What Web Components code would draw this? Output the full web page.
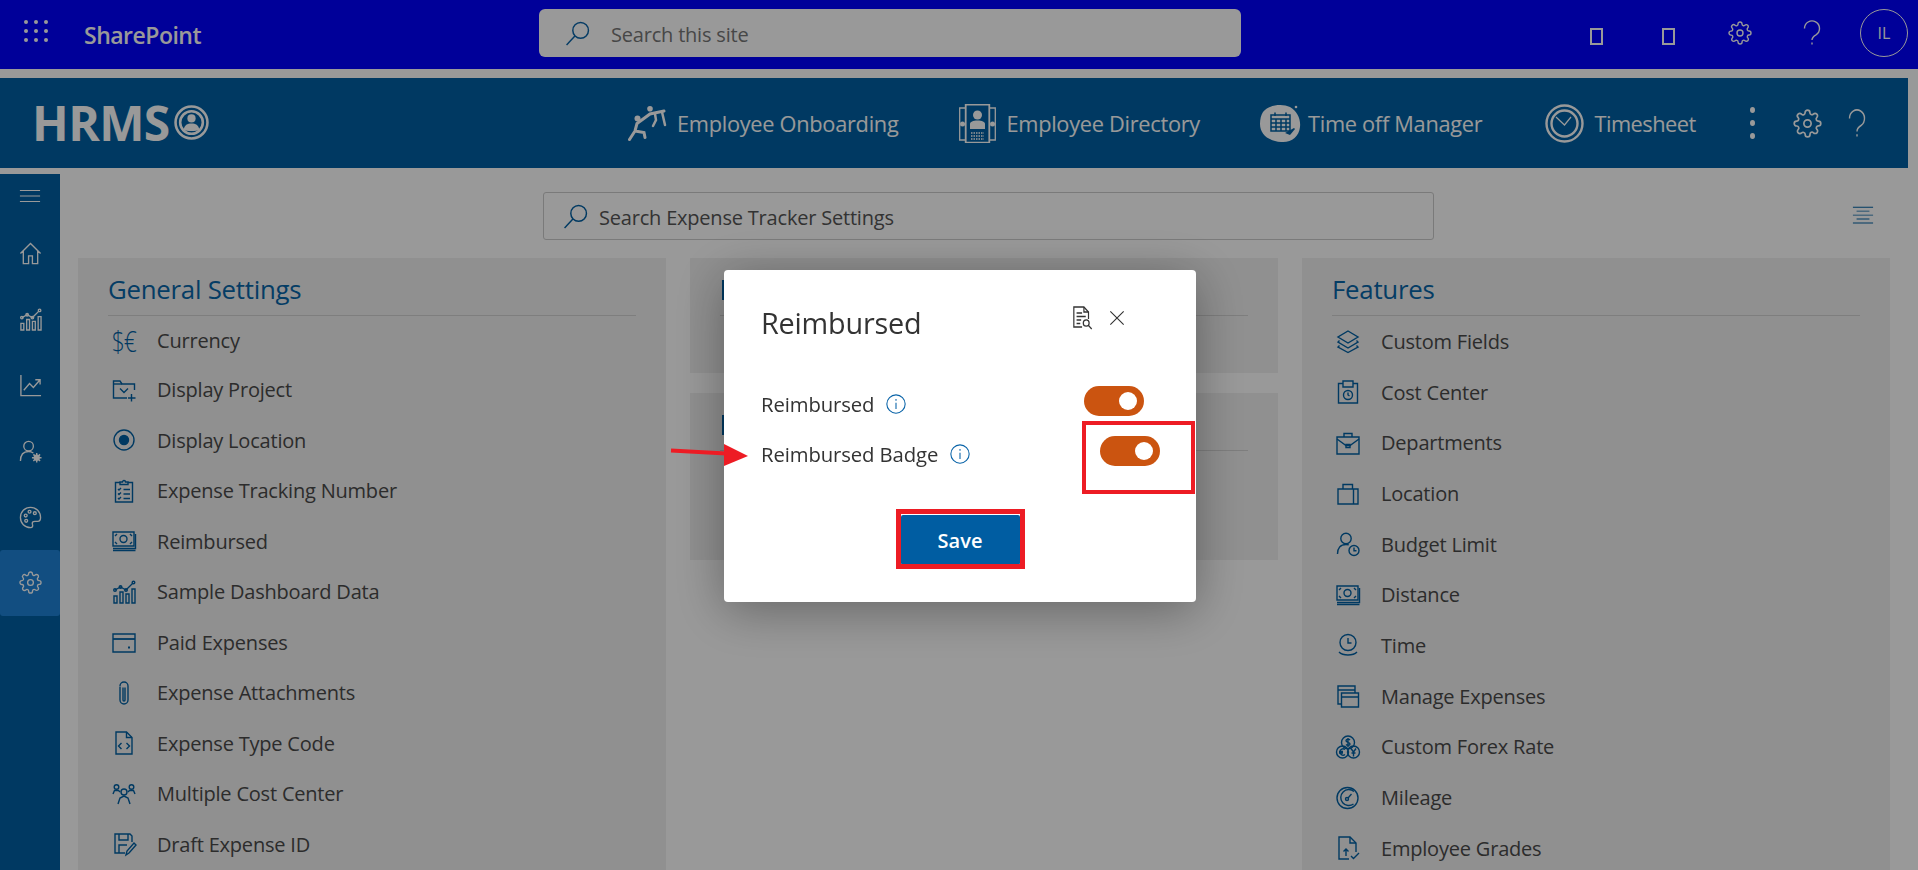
<!DOCTYPE html>
<html lang="en">
<head>
<meta charset="utf-8">
<title>Expense Tracker Settings</title>
<style>
    html, body { margin: 0; height: 100%; overflow: hidden; background: #fff; }
    body { font-family: "Open Sans", "Noto Sans", sans-serif; }
</style>
</head>
<body>
<page-shell>
    <top-bar></top-bar>
    <app-header></app-header>
    <div slot="body" style="display:flex; height:702px;">
        <side-rail></side-rail>
        <settings-main>
            <settings-panel slot="first" heading="General Settings" style="--row:50.5px; --list-top:-2px;">
                <settings-item icon="currency" style="box-sizing:border-box; padding-top:3px;">Currency</settings-item>
                <settings-item icon="folder">Display Project</settings-item>
                <settings-item icon="radio">Display Location</settings-item>
                <settings-item icon="clipboard">Expense Tracking Number</settings-item>
                <settings-item icon="money">Reimbursed</settings-item>
                <settings-item icon="bars">Sample Dashboard Data</settings-item>
                <settings-item icon="card">Paid Expenses</settings-item>
                <settings-item icon="clip">Expense Attachments</settings-item>
                <settings-item icon="code">Expense Type Code</settings-item>
                <settings-item icon="team">Multiple Cost Center</settings-item>
                <settings-item icon="draft">Draft Expense ID</settings-item>
            </settings-panel>
            <settings-panel slot="middle" stem style="height:115px;"></settings-panel>
            <settings-panel slot="middle" stem style="height:167px;"></settings-panel>
            <settings-panel slot="last" heading="Features">
                <settings-item icon="layers">Custom Fields</settings-item>
                <settings-item icon="cost">Cost Center</settings-item>
                <settings-item icon="briefcase">Departments</settings-item>
                <settings-item icon="suitcase">Location</settings-item>
                <settings-item icon="userclock">Budget Limit</settings-item>
                <settings-item icon="money">Distance</settings-item>
                <settings-item icon="time">Time</settings-item>
                <settings-item icon="windows">Manage Expenses</settings-item>
                <settings-item icon="coins">Custom Forex Rate</settings-item>
                <settings-item icon="gauge">Mileage</settings-item>
                <settings-item icon="fileup">Employee Grades</settings-item>
            </settings-panel>
        </settings-main>
    </div>
</page-shell>

<modal-dialog heading="Reimbursed">
    <toggle-row style="--end:52px;">Reimbursed</toggle-row>
    <toggle-row style="--end:36px;">Reimbursed Badge</toggle-row>
</modal-dialog>

<script>
const GEAR = `<path d="M19.4 15a1.65 1.65 0 0 0 .33 1.82l.06.06a2 2 0 1 1-2.83 2.83l-.06-.06a1.65 1.65 0 0 0-1.82-.33 1.65 1.65 0 0 0-1 1.51V21a2 2 0 0 1-4 0v-.09A1.65 1.65 0 0 0 9 19.4a1.65 1.65 0 0 0-1.82.33l-.06.06a2 2 0 1 1-2.83-2.83l.06-.06a1.65 1.65 0 0 0 .33-1.82 1.65 1.65 0 0 0-1.51-1H3a2 2 0 0 1 0-4h.09A1.65 1.65 0 0 0 4.6 9a1.65 1.65 0 0 0-.33-1.82l-.06-.06a2 2 0 1 1 2.83-2.83l.06.06a1.65 1.65 0 0 0 1.82.33H9a1.65 1.65 0 0 0 1-1.51V3a2 2 0 0 1 4 0v.09a1.65 1.65 0 0 0 1 1.51 1.65 1.65 0 0 0 1.82-.33l.06-.06a2 2 0 1 1 2.83 2.83l-.06.06a1.65 1.65 0 0 0-.33 1.82V9a1.65 1.65 0 0 0 1.51 1H21a2 2 0 0 1 0 4h-.09a1.65 1.65 0 0 0-1.51 1z"/><circle cx="12" cy="12" r="3"/>`;

// all the line icons, drawn on a 24 box
const ICONS = {
    search: `<circle cx="15" cy="9" r="7.5"/><path d="M9.5 14.5 1.5 23"/>`,
    gear: GEAR,
    question: `<path d="M4.5 7.5a7.5 7.5 0 1 1 11.5 6.3c-2.5 1.5-4 3-4 5.2"/><path d="M12 21.500v2"/>`,
    menu: `<path d="M1 2.5h22M1 12h22M1 21.500h22"/>`,
    justify: `<path d="M1 1.5h22M5 6.5h14M1 11.5h22M5 16.5h14M1 21.5h22"/>`,
    home: `<path d="M1.5 12 12 1.5 22.5 12M4.5 9.5V22.5h5.5v-8h4v8h5.5V9.5"/>`,
    bars: `<path d="M2 16h3v7H2zM8 12h3v11H8zM14 14h3v9h-3zM20 9h3v14h-3z"/><path d="M3 10l5.5-3 5.5 3L21 3"/><circle cx="3" cy="10" r="1.3"/><circle cx="8.5" cy="7" r="1.3"/><circle cx="14" cy="10" r="1.3"/><circle cx="21.5" cy="2.5" r="1.3"/>`,
    chart: `<path d="M2 1v21.5h21"/><path d="M5 17l6-7 4 4 7-8M17 6h5v5"/>`,
    usergear: `<circle cx="10" cy="6.5" r="5"/><path d="M1.5 22c0-6 3-10 8.5-10 2 0 3.500.5 5 1.500"/><circle cx="18.500" cy="18.500" r="2" stroke-width="2.500"/><path d="M18.500 13.500v10M13.500 18.500h10M15 15l7 7M22 15l-7 7" stroke-width="1.500"/>`,
    palette: `<path d="M12 1.500C6 1.500 1.500 6 1.500 12S6 22.500 12 22.500c2.500 0 2.500-2 2-3.500-.5-2 .5-3 2.500-3h3c2 0 3-1.500 3-4C22.500 6 18 1.500 12 1.500z"/><circle cx="7" cy="10" r="1.500"/><circle cx="11" cy="6" r="1.500"/><circle cx="16.500" cy="7.500" r="1.500"/><circle cx="7.500" cy="15.500" r="1.500"/>`,
    folder: `<path d="M22.500 12V6H10L8 3H1.500v17H15"/><path d="M1.500 6H10"/><path d="M8 10.500l4 4 4-4M19.500 16v7.500M16 20h7.500"/>`,
    radio: `<circle cx="12" cy="12" r="10"/><circle cx="12" cy="12" r="4.500" fill="currentColor"/>`,
    clipboard: `<path d="M8 3.500H3.500v19.500h17V3.500H16"/><path d="M8 5.500V3h2.500a1.500 1.500 0 0 1 3 0H16v2.500z"/><path d="M6 10l1 1 2-2M6 14.500l1 1 2-2M6 19l1 1 2-2M11.500 10.500H18M11.500 15H18M11.500 19.500H18"/>`,
    money: `<path d="M1 3h21v14H1z"/><circle cx="11.500" cy="10" r="3.500"/><path d="M3 7l2-2M3 13l2 2M20 7l-2-2M20 13l-2 2"/><path d="M1 19.500h22.500V5M1 21.500h22.500"/>`,
    card: `<path d="M1 4h22v18H1z"/><path d="M1 9h22" stroke-width="1.800"/><path d="M16 17.500h2" stroke-width="2"/>`,
    clip: `<path d="M8 5.500V19a4 4 0 0 0 8 0V5a4 4 0 0 0-8 0"/><path d="M11 6.500V19a1 1 0 0 0 2 0V6.500"/>`,
    code: `<path d="M4 1h10.500L20 6.500V23H4z"/><path d="M14.500 1v5.500H20"/><path d="M9.500 12l-3 3 3 3M14.500 12l3 3-3 3"/>`,
    team: `<circle cx="12" cy="10" r="3"/><path d="M6 22l2-6 4-2 4 2 2 6"/><circle cx="4.500" cy="5" r="2.300"/><circle cx="19.500" cy="5" r="2.300"/><path d="M1 12l1.500-3.500h4L8 10M16 10l1.500-1.500h4L23 12"/>`,
    draft: `<path d="M13 21H3V2h15l2 2v6"/><path d="M7 2v6h9V2M7 21v-8h8"/><path d="M14 23l1-4 7-8 2 2-7 8z"/>`,
    layers: `<path d="M12 2 22 8l-10 6L2 8z"/><path d="M3.500 11.500 2 13l10 6 10-6-1.500-1.500"/><path d="M3.500 16.500 2 18l10 5.500L22 18l-1.500-1.500"/>`,
    cost: `<path d="M7 3.500H2.500V23h19V3.500H17"/><path d="M7 1h10v6H7z"/><circle cx="12" cy="15" r="4.500"/><path d="M12 12.500V15l1.500 1"/>`,
    briefcase: `<path d="M1 6h22v17H1z"/><path d="M8 6V2.500h8V6"/><path d="M1 8l9 6.500h4L23 8"/><path d="M10 13.500h4v3h-4z"/>`,
    suitcase: `<path d="M2 8h20v15H2z"/><path d="M7 8V3.500h9.500V8M17.500 8v15"/>`,
    userclock: `<circle cx="10" cy="6.500" r="5.200"/><path d="M1.500 22c0-6 3-9.500 8.500-9.500 1 0 2 .1 2.800.4"/><circle cx="18" cy="18.500" r="5"/><path d="M18 15.500v3.200h2.500"/>`,
    time: `<circle cx="12" cy="9.500" r="8"/><path d="M12 5v5h3.500"/><path d="M3 19c4 4 14 4 18 0"/>`,
    windows: `<path d="M2 2h17v4H2zM2 6v14h3M19 6v3"/><path d="M5.500 9h17v14h-17zM5.500 13h17"/>`,
    coins: `<circle cx="12" cy="7.500" r="6.500"/><circle cx="6.500" cy="17" r="6"/><circle cx="17.500" cy="17" r="6"/><path d="M14 5c-1-1.200-4-1.200-4 .7 0 2 4 1.200 4 3.200 0 1.800-3 1.800-4 .6M12 3v9"/><path d="M9 14.500c-2-1.500-5-.5-5 2.500s3 4 5 2.500M3 16.500h4M3 18h4"/><path d="M15 13.500l2.500 3.500 2.500-3.500M17.500 17v4.500M15.500 18h4"/>`,
    gauge: `<circle cx="11.500" cy="12" r="10.500"/><path d="M18 5.500A8 8 0 1 0 17.500 18"/><circle cx="11" cy="13" r="1.500"/><path d="M12 12l3.500-4"/>`,
    fileup: `<path d="M13 23H3V1h11l6 6v9"/><path d="M14 1v6h6"/><path d="M10 20v-7M7.500 15.500 10 13l2.500 2.500M15 20l2.500 2.500L23 17"/>`,
    docsearch: `<path d="M11 21H2V1h11l5 5v7"/><path d="M13 1v5h5M5 7h6M5 10.500h10M5 14h5M5 17.500h4"/><circle cx="15.500" cy="17" r="3.200"/><path d="M18 19.500l3.500 3.500"/>`,
    close: `<path d="M2 2l20 20M22 2 2 22"/>`,
    info: `<circle cx="12" cy="12" r="11"/><path d="M12 10.500V18"/><path d="M12 6v2" />`
};

// <ui-icon name="..."> a line icon, sized from the outside with --size
class UiIcon extends HTMLElement {
    constructor() {
        super();
        this.attachShadow({ mode: 'open' });
    }

    connectedCallback() {
        const name = this.getAttribute('name');
        const sw = this.getAttribute('sw') || '1.4';
        this.shadowRoot.innerHTML = `
            <style>
                :host{ display:inline-flex; width:var(--size,24px); height:var(--size-h,var(--size,24px)); flex:none; }
                svg{ width:100%; height:100%; display:block; overflow:visible; }
            </style>
            <svg viewBox="0 0 24 24" preserveAspectRatio="none" fill="none" stroke="currentColor" stroke-width="${sw}">${ICONS[name]}</svg>`;
    }
}
customElements.define('ui-icon', UiIcon);

class PageShell extends HTMLElement {
    constructor() {
        super();
        const template = document.createElement('template');
        template.innerHTML = `
            <style>
                :host{ display:flex; flex-direction:column; height:870px; overflow:hidden; background:#fff; }
            </style>
            <slot></slot>
            <slot name="body"></slot>`;
        this.attachShadow({ mode: 'open' });
        this.shadowRoot.appendChild(template.content.cloneNode(true));
    }
}
customElements.define('page-shell', PageShell);

class TopBar extends HTMLElement {
    constructor() {
        super();
        const dots = Array.from({ length: 9 }, () => '<i></i>').join('');
        this.attachShadow({ mode: 'open' });
        this.shadowRoot.innerHTML = `
            <style>
                :host{ display:flex; align-items:center; height:69px; background:#0000ff; color:#fff; flex:none; }
                .left{ width:539px; display:flex; align-items:center; flex:none; }
                .waffle{ display:grid; grid-template-columns:repeat(3,4px); gap:5px 6px; margin:-8px 0 0 24px; }
                .waffle i{ width:4px; height:4px; border-radius:50%; background:#fff; }
                .brand{ margin:0 0 0 36px; font-size:23px; font-weight:600; letter-spacing:-.5px; }
                .search{ width:702px; height:48px; margin-bottom:3px; background:#fff; border-radius:6px; display:flex; align-items:center; flex:none; box-sizing:border-box; padding-left:26px; }
                .search ui-icon{ --size:25px; color:#0a64a8; }
                .search span{ margin-left:21px; padding-top:3px; font-size:20px; color:#777; letter-spacing:-.2px; }
                .right{ margin-left:auto; display:flex; align-items:center; padding-right:10px; }
                .cell{ width:72px; display:flex; justify-content:center; margin-top:-4px; }
                .tofu{ width:9px; height:13px; border:2px solid #fff; margin-top:8px; }
                .cell ui-icon{ --size:24px; }
                .avatar{ width:46px; height:46px; border:1px solid #fff; border-radius:50%; margin-left:12px; display:flex; align-items:center; justify-content:center; font-size:16px; margin-bottom:3px; }
            </style>
            <div class="left"><div class="waffle">${dots}</div><div class="brand">SharePoint</div></div>
            <div class="search"><ui-icon name="search"></ui-icon><span>Search this site</span></div>
            <div class="right">
                <div class="cell"><div class="tofu"></div></div>
                <div class="cell"><div class="tofu"></div></div>
                <div class="cell"><ui-icon name="gear" sw="1.400"></ui-icon></div>
                <div class="cell"><ui-icon name="question" sw="1.400"></ui-icon></div>
                <div class="avatar">IL</div>
            </div>`;
    }
}
customElements.define('top-bar', TopBar);

class AppHeader extends HTMLElement {
    constructor() {
        super();
        this.attachShadow({ mode: 'open' });
        this.shadowRoot.innerHTML = `
            <style>
                :host{ display:flex; align-items:center; height:90px; margin:9px 10px 0 0; background:#0060a3; color:#fff; flex:none; }
                .logo{ width:628px; box-sizing:border-box; padding-left:32px; display:flex; align-items:center; flex:none; font-weight:700; font-size:48px; letter-spacing:-.6px; color:#fff; margin-top:-2px; }
                .logo svg{ width:35px; height:35px; margin-left:4px; }
                nav{ display:flex; align-items:center; gap:60px; }
                a{ display:flex; align-items:center; gap:10px; font-size:21.800px; letter-spacing:-.3px; color:#fff; }
                a:first-child{ margin-right:1px; }
                a:nth-child(3){ gap:6px; margin-right:3px; }
                a:nth-child(4){ letter-spacing:-.5px; }
                .tools{ display:flex; align-items:center; margin-left:54px; }
                .dots{ display:flex; flex-direction:column; gap:7px; width:5px; }
                .dots i{ width:5px; height:6px; border-radius:50%; background:#fff; }
                .tools ui-icon{ --size:29px; margin-left:38px; }
                .tools ui-icon.q{ --size:24px; --size-h:27px; margin-left:23px; }
            </style>
            <div class="logo">HRMS<svg viewBox="0 0 34 34" fill="none" stroke="#fff"><circle cx="17" cy="17" r="15.500" stroke-width="2.500"/><circle cx="17" cy="17" r="11" stroke-width="2.500"/><circle cx="17" cy="13" r="4" fill="#fff" stroke="none"/><path d="M9.500 24c.5-4.500 3.500-6 7.500-6s7 1.500 7.500 6c-2 1.800-13 1.800-15 0z" fill="#fff" stroke="none"/></svg></div>
            <nav>
                <a><svg width="39" height="35" viewBox="0 0 39 35" fill="none" stroke="#fff" stroke-width="3" stroke-linecap="round"><circle cx="9.500" cy="12.500" r="3" fill="#fff" stroke="none"/><circle cx="22" cy="2.800" r="2.800" fill="#fff" stroke="none"/><path d="M9 17.500 7 25 1.500 33.500M7 25l9 1.500 1 5M9 17.500 22 8 36 5"/><path d="M27 8l1 6-3 6M34 6l3 13" stroke-width="2.500"/></svg>Employee Onboarding</a>
                <a><svg width="37" height="39" viewBox="0 0 37 39" fill="none" stroke="#fff" stroke-width="1.300"><path d="M7 4H.7v32H7M30 4h6.300v32H30"/><path d="M6.700.7h23.600v38H6.700z" stroke-width="1.800"/><circle cx="18.500" cy="11" r="4.500" fill="#fff" stroke="none"/><path d="M11 25v-5c0-2 3-3.500 7.500-3.500S26 18 26 20v5z" fill="#fff" stroke="none"/><path d="M12 29h13M12 32h13M12 35h13" stroke-dasharray="1.500 1"/><circle cx="3.500" cy="20" r="2.500" fill="#fff" stroke="none"/><circle cx="33.500" cy="20" r="2.500" fill="#fff" stroke="none"/></svg>Employee Directory</a>
                <a><svg width="42" height="39" viewBox="0 0 42 39"><path d="M3 8C8 1 22-1 30 3c7 4 11 12 10 20-1 10-9 16-19 15C8 37 0 30 0 20 0 15 1 11 3 8z" fill="#fff"/><circle cx="36" cy="3" r="1.300" fill="#fff"/><g fill="none" stroke="#0060a3" stroke-width="1.500"><path d="M11 11h19v16H11zM11 15h19M15 8.500V12M26 8.500V12M11 19h19M11 23h19M16 15v12M21 15v12M26 15v12"/></g><path d="M25 29l9-5 1 1-5 6z" fill="#0060a3"/></svg>Time off Manager</a>
                <a><svg width="39" height="39" viewBox="0 0 39 39" fill="none" stroke="#fff" stroke-width="2.400"><circle cx="19.500" cy="19.500" r="18"/><circle cx="19.500" cy="19.500" r="13"/><path d="M11 13l8.500 8L26 13" stroke-width="1.200"/></svg>Timesheet</a>
            </nav>
            <div class="tools">
                <div class="dots"><i></i><i></i><i></i></div>
                <ui-icon name="gear"></ui-icon>
                <ui-icon class="q" name="question"></ui-icon>
            </div>`;
    }
}
customElements.define('app-header', AppHeader);

class SideRail extends HTMLElement {
    constructor() {
        super();
        const names = ['home', 'bars', 'chart', 'usergear', 'palette', 'gear'];
        const cells = names.map((n, i) =>
            `<div class="cell ${i === 5 ? 'on' : ''}"><ui-icon name="${n}"></ui-icon></div>`).join('');
        this.attachShadow({ mode: 'open' });
        this.shadowRoot.innerHTML = `
            <style>
                :host{ display:block; width:60px; flex:none; margin-top:6px; background:#0060a3; color:#fff; }
                .burger{ height:47px; display:flex; align-items:center; justify-content:center; }
                .burger ui-icon{ --size:22px; --size-h:14px; margin-top:-4px; }
                .cell{ height:65.800px; display:flex; align-items:center; justify-content:center; border-radius:3px; }
                .cell ui-icon{ --size:23px; }
                .on{ background:#1e83d8; }
            </style>
            <div class="burger"><ui-icon name="menu" sw="1.800"></ui-icon></div>
            ${cells}`;
    }
}
customElements.define('side-rail', SideRail);

// the search row and the three columns under it
class SettingsMain extends HTMLElement {
    constructor() {
        super();
        this.attachShadow({ mode: 'open' });
        this.shadowRoot.innerHTML = `
            <style>
                :host{ display:block; flex:1; min-width:0; padding:24px 28px 0 18px; }
                .top{ display:grid; grid-template-columns:465px 891px 1fr; align-items:center; height:48px; margin-bottom:18px; }
                .box{ grid-column:2; height:48px; box-sizing:border-box; border:1px solid #ccc; border-radius:3px; display:flex; align-items:center; padding-left:19px; }
                .box ui-icon{ --size:25px; color:#0060a3; }
                .box span{ margin-left:11px; padding-top:3px; font-size:20px; color:#555; letter-spacing:-.2px; }
                .top > ui-icon{ justify-self:end; margin-right:16px; --size:22px; --size-h:19px; color:#0060a3; margin-top:-2px; }
                .cols{ display:grid; grid-template-columns:repeat(3,588px); gap:24px; height:700px; }
                .mid{ display:flex; flex-direction:column; gap:20px; }
                ::slotted(settings-panel){ display:block; }
            </style>
            <div class="top">
                <div class="box"><ui-icon name="search"></ui-icon><span>Search Expense Tracker Settings</span></div>
                <ui-icon name="justify" sw="1.200"></ui-icon>
            </div>
            <div class="cols">
                <slot name="first"></slot>
                <div class="mid"><slot name="middle"></slot></div>
                <slot name="last"></slot>
            </div>`;
    }
}
customElements.define('settings-main', SettingsMain);

class SettingsPanel extends HTMLElement {
    constructor() {
        super();
        const heading = this.getAttribute('heading');
        const stem = this.hasAttribute('stem');
        this.attachShadow({ mode: 'open' });
        this.shadowRoot.innerHTML = `
            <style>
                :host{ display:block; background:#f0f0f0; box-sizing:border-box; padding:14px 30px 0; overflow:hidden; }
                h2{ margin:0; font-weight:400; font-size:25.800px; line-height:34px; height:34px; padding-bottom:9px; border-bottom:1px solid #d2d2d2; color:#0866a8; letter-spacing:-.25px; }
                .stem{ display:inline-block; width:3px; height:20px; background:#0060a3; margin:8px 0 0 2px; vertical-align:top; }
                .list{ margin-top:var(--list-top,0); }
            </style>
            <h2>${heading || ''}${stem ? '<span class="stem"></span>' : ''}</h2>
            <div class="list"><slot></slot></div>`;
    }
}
customElements.define('settings-panel', SettingsPanel);

class SettingsItem extends HTMLElement {
    constructor() {
        super();
        const icon = this.getAttribute('icon');
        const glyph = icon === 'currency'
            ? '<span class="cur">$€</span>'
            : `<ui-icon name="${icon}"></ui-icon>`;
        this.attachShadow({ mode: 'open' });
        this.shadowRoot.innerHTML = `
            <style>
                :host{ display:flex; align-items:center; height:var(--row,50.700px); color:#4a4a4a; font-size:20px; letter-spacing:-.2px; }
                .ico{ width:32px; margin-right:17px; display:flex; justify-content:center; color:#0060a3; flex:none; }
                .ico ui-icon{ --size:24px; }
                .cur{ display:inline-block; transform:scale(.95,1.250); font-size:24px; letter-spacing:-1px; line-height:24px; font-weight:300; color:#0060a3; }
            </style>
            <div class="ico">${glyph}</div>
            <slot></slot>`;
    }
}
customElements.define('settings-item', SettingsItem);

class ToggleRow extends HTMLElement {
    constructor() {
        super();
        this.attachShadow({ mode: 'open' });
        this.shadowRoot.innerHTML = `
            <style>
                :host{ display:flex; align-items:center; height:50px; font-size:20.300px; font-weight:500; color:#333; letter-spacing:-.1px; }
                .label{ padding-top:2px; }
                ui-icon{ --size:20px; color:#0a64a8; margin:1px 0 0 12px; }
                .sw{ width:60px; height:30px; border-radius:15px; background:#cb5410; margin:-4px var(--end,36px) 0 auto; position:relative; flex:none; }
                .sw::after{ content:""; position:absolute; right:7px; top:6px; width:18px; height:18px; border-radius:50%; background:#fff; }
            </style>
            <span class="label"><slot></slot></span><ui-icon name="info" sw="1.300"></ui-icon>
            <div class="sw"></div>`;
    }
}
customElements.define('toggle-row', ToggleRow);

// backdrop and dialog, lying over the whole page. the red marks are part of the screenshot
class ModalDialog extends HTMLElement {
    constructor() {
        super();
        const heading = this.getAttribute('heading');
        this.attachShadow({ mode: 'open' });
        this.shadowRoot.innerHTML = `
            <style>
                :host{ position:fixed; inset:0; display:block; background:rgba(0,0,0,.4); }
                .box{ position:absolute; left:724px; top:270px; width:472px; height:332px; box-sizing:border-box; padding:32px 0 0 37px; background:#fff; border-radius:4px; box-shadow:0 8px 50px rgba(0,0,0,.35); }
                .head{ display:flex; align-items:flex-start; height:76px; }
                h2{ margin:0; font-size:28.800px; font-weight:500; line-height:42px; color:#333; letter-spacing:-.2px; }
                .acts{ margin:4px 71px 0 auto; display:flex; align-items:center; gap:15px; color:#333; }
                .acts .doc{ --size:22px; --size-h:24px; }
                .acts .x{ --size:16px; }
                .foot{ display:flex; justify-content:center; margin:37px 0 0 -37px; }
                button{ width:119px; height:50px; background:#005da2; color:#fff; border:0; border-radius:2px; font:600 20px "Open Sans",sans-serif; padding:0; }
                .mark{ position:absolute; box-sizing:border-box; border:5px solid #ed1c24; }
                .m1{ left:358px; top:151px; width:113px; height:73px; border-width:4px; }
                .m2{ left:172px; top:239px; width:129px; height:60px; }
                .arrow{ position:absolute; left:-54px; top:171px; overflow:visible; }
            </style>
            <div class="box">
                <div class="head">
                    <h2>${heading}</h2>
                    <div class="acts"><ui-icon class="doc" name="docsearch" sw="1.300"></ui-icon><ui-icon class="x" name="close" sw="1.700"></ui-icon></div>
                </div>
                <slot></slot>
                <div class="foot"><button>Save</button></div>
                <div class="mark m1"></div>
                <div class="mark m2"></div>
                <svg class="arrow" width="78" height="26"><path d="M1 9.500 56 12.500" stroke="#ed1c24" stroke-width="4"/><polygon points="54,3 78,15 54,25" fill="#ed1c24"/></svg>
            </div>`;
    }
}
customElements.define('modal-dialog', ModalDialog);
</script>
</body>
</html>
